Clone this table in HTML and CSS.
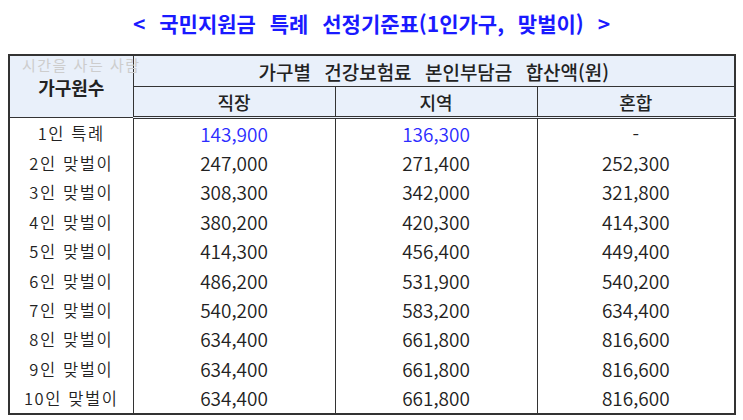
FILE: index.html
```html
<!DOCTYPE html>
<html lang="ko">
<head>
<meta charset="utf-8">
<link rel="stylesheet" href="styles.css">
</head>
<body>
<h1 class="title">&lt; 국민지원금 특례 선정기준표(1인가구, 맞벌이) &gt;</h1>
<div class="wrap">
<table class="tbl">
  <colgroup>
    <col class="c1"><col class="c2"><col class="c3"><col class="c4">
  </colgroup>
  <thead>
    <tr class="h1">
      <th rowspan="2" class="first"><span class="wm">시간을 사는 사람</span>가구원수</th>
      <th colspan="3">가구별 건강보험료 본인부담금 합산액(원)</th>
    </tr>
    <tr class="h2">
      <th>직장</th><th>지역</th><th>혼합</th>
    </tr>
  </thead>
  <tbody>
    <tr><td class="lbl">1인 특례</td><td class="blue">143,900</td><td class="blue">136,300</td><td>-</td></tr>
    <tr><td class="lbl">2인 맞벌이</td><td>247,000</td><td>271,400</td><td>252,300</td></tr>
    <tr><td class="lbl">3인 맞벌이</td><td>308,300</td><td>342,000</td><td>321,800</td></tr>
    <tr><td class="lbl">4인 맞벌이</td><td>380,200</td><td>420,300</td><td>414,300</td></tr>
    <tr><td class="lbl">5인 맞벌이</td><td>414,300</td><td>456,400</td><td>449,400</td></tr>
    <tr><td class="lbl">6인 맞벌이</td><td>486,200</td><td>531,900</td><td>540,200</td></tr>
    <tr><td class="lbl">7인 맞벌이</td><td>540,200</td><td>583,200</td><td>634,400</td></tr>
    <tr><td class="lbl">8인 맞벌이</td><td>634,400</td><td>661,800</td><td>816,600</td></tr>
    <tr><td class="lbl">9인 맞벌이</td><td>634,400</td><td>661,800</td><td>816,600</td></tr>
    <tr><td class="lbl">10인 맞벌이</td><td>634,400</td><td>661,800</td><td>816,600</td></tr>
  </tbody>
</table>
</div>
</body>
</html>
```
FILE: styles.css
```css
html, body {
  margin: 0;
  padding: 0;
  background: #ffffff;
}
body {
  font-family: "Noto Sans CJK KR", "Noto Sans", sans-serif;
  color: #222;
}
.title {
  margin: 0;
  padding-top: 10px;
  height: 47px;
  box-sizing: border-box;
  text-align: center;
  font-size: 21px;
  line-height: 26px;
  font-weight: 700;
  color: #1a1aff;
  word-spacing: 8px;
}
.wrap {
  padding: 7px 8px 0 8px;
}
.tbl {
  width: 726px;
  border-collapse: collapse;
  table-layout: fixed;
  border: 2px solid #333;
}
.c1 { width: 124px; }
.c2 { width: 202px; }
.c3 { width: 202px; }
.c4 { width: 198px; }
th {
  background: #e9f0fa;
  font-weight: 500;
  font-size: 18px;
  color: #222;
  border: 1px solid #333;
  padding: 0;
}
.h1 th { height: 30px; }
.h1 th:not(.first) { word-spacing: 8px; font-size: 19px; }
.h2 th { height: 29px; border-bottom: 3px double #333; }
.first { position: relative; font-size: 18px; font-weight: 700; }
.wm {
  position: absolute;
  left: 12px;
  top: -2px;
  font-size: 15px;
  font-weight: 400;
  color: #cdcdcd;
  white-space: nowrap;
  letter-spacing: 1.5px;
}
td {
  border-left: 1px solid #333;
  border-right: 1px solid #333;
  text-align: center;
  font-size: 19px;
  font-weight: 350;
  height: 29.4px;
  padding: 0;
  line-height: 20px;
  color: #222;
}
.lbl { letter-spacing: 1.6px; font-size: 16.5px; }
.blue { color: #2c2cff; }
```
